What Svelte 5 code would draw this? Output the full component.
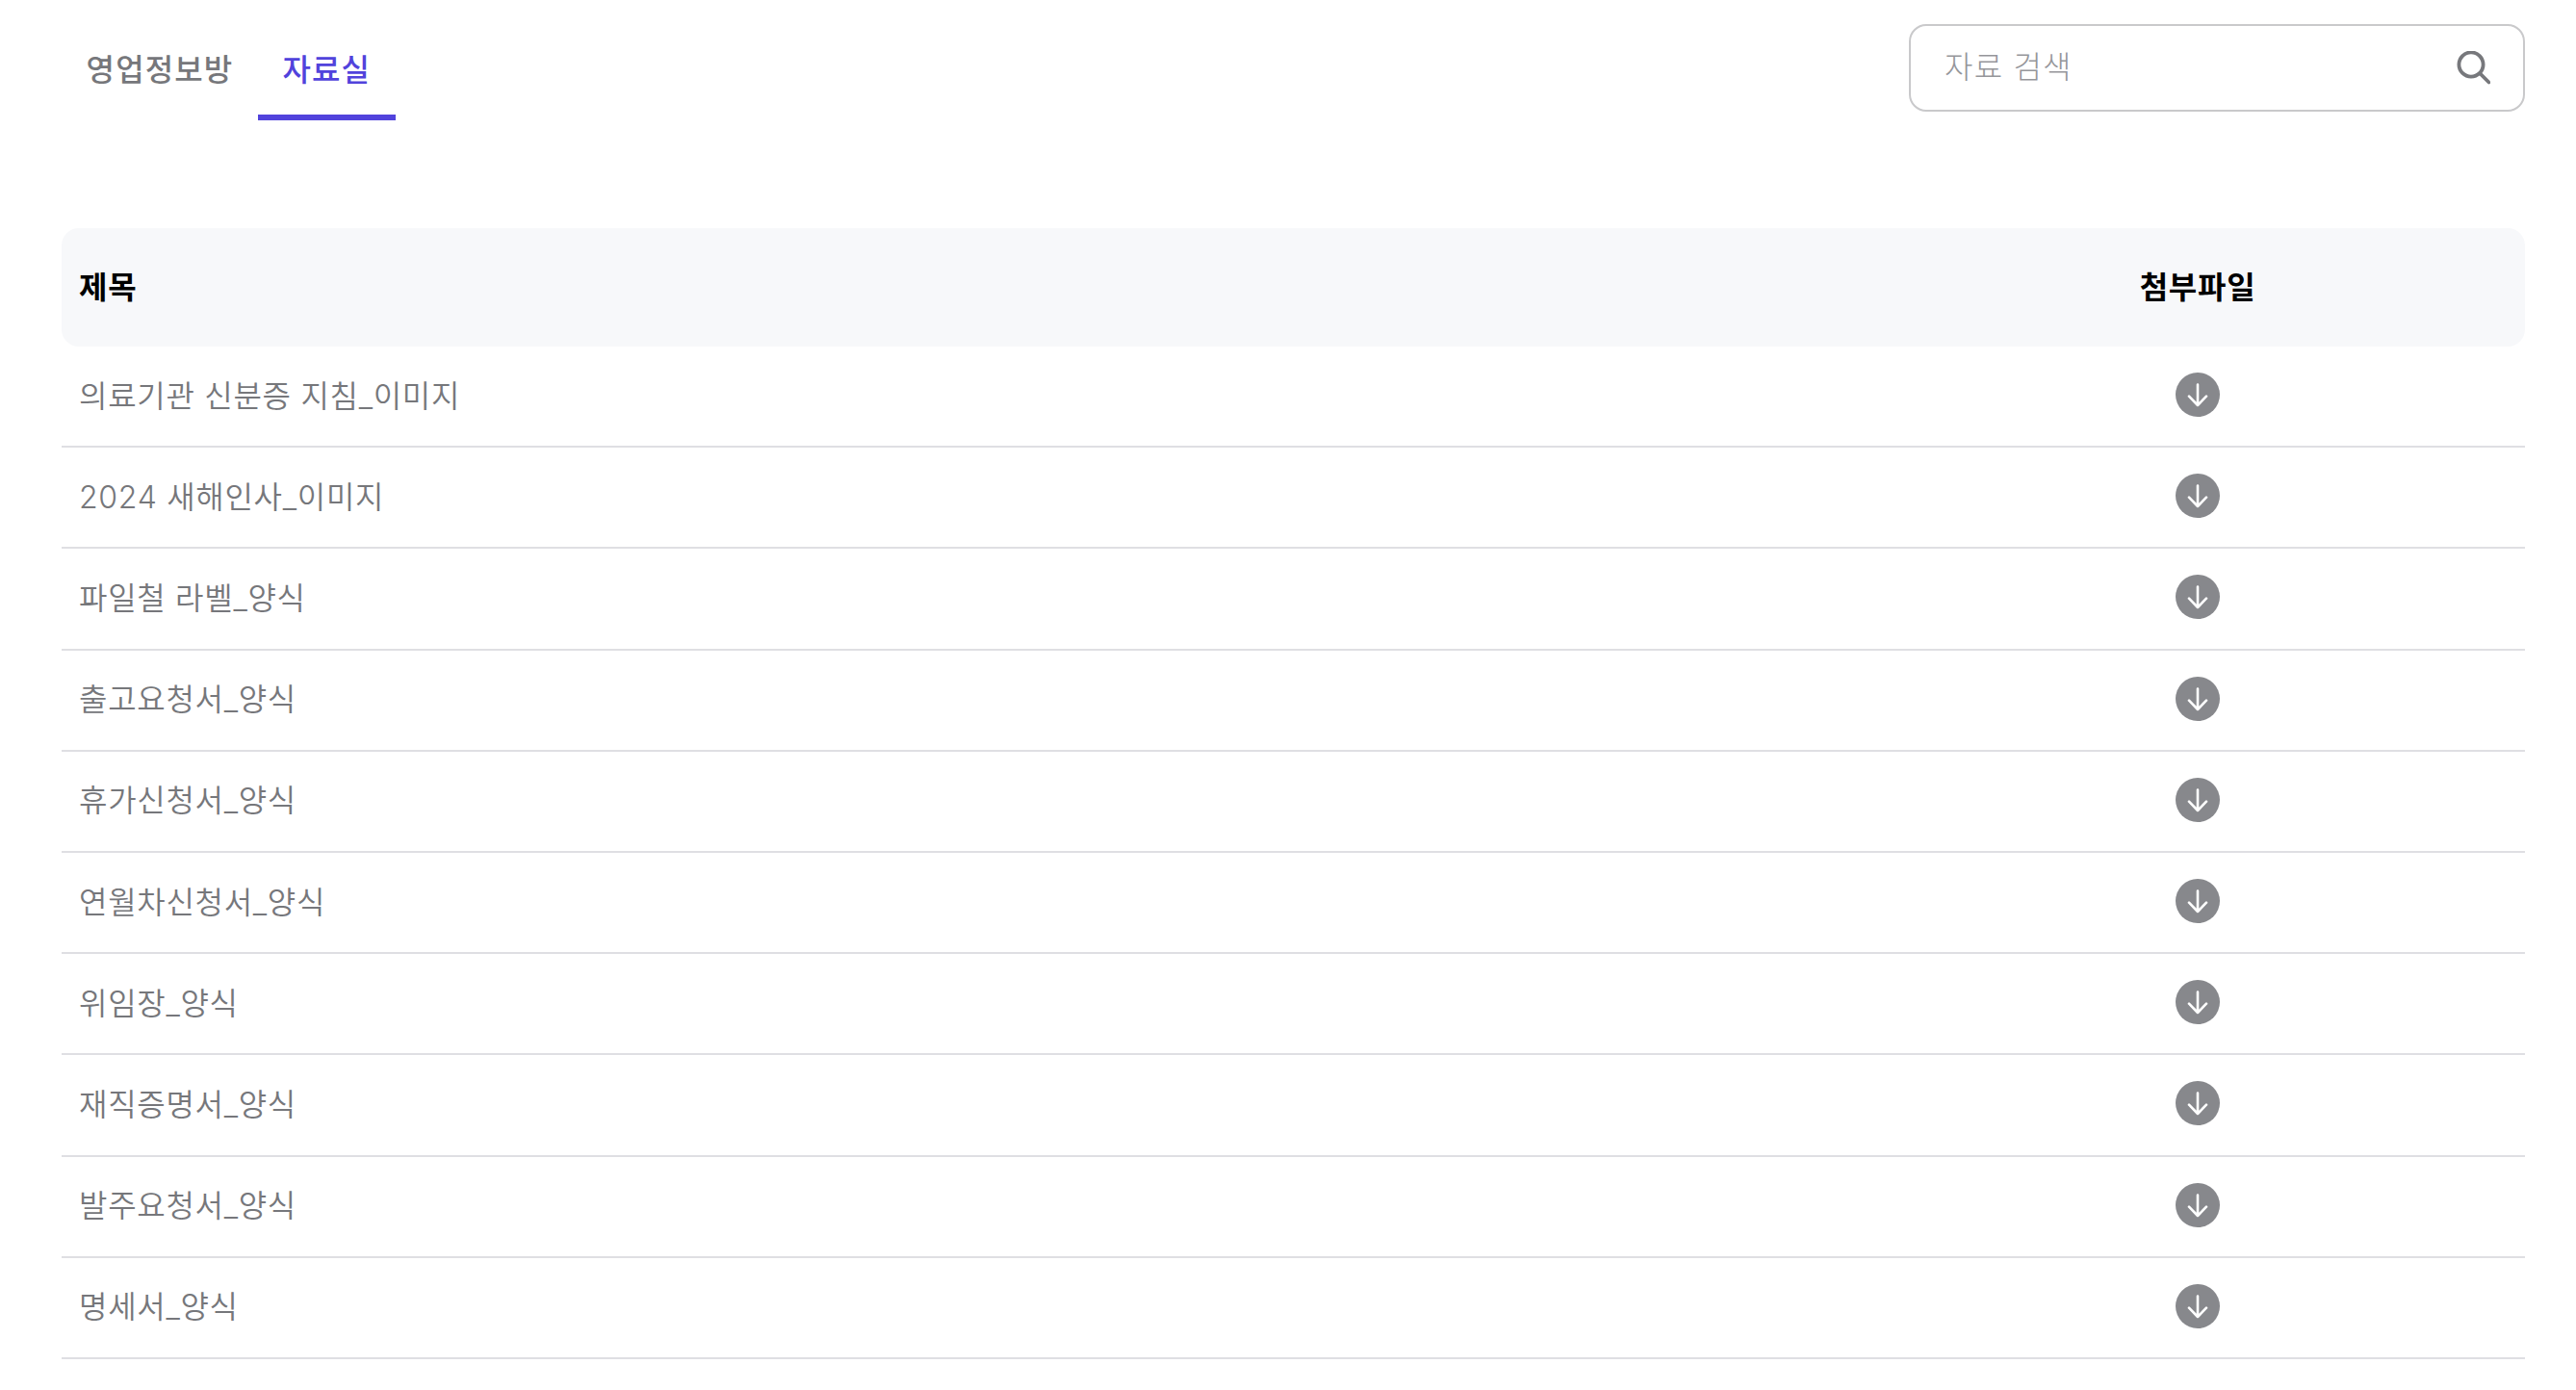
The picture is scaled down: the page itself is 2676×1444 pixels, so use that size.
<script lang="ts">
  const files: string[] = [
    '의료기관 신분증 지침_이미지',
    '2024 새해인사_이미지',
    '파일철 라벨_양식',
    '출고요청서_양식',
    '휴가신청서_양식',
    '연월차신청서_양식',
    '위임장_양식',
    '재직증명서_양식',
    '발주요청서_양식',
    '명세서_양식'
  ];
</script>

<div class="page">
  <div class="top">
    <nav class="tabs">
      <button class="tab"><span>영업정보방</span></button>
      <button class="tab active"><span>자료실</span></button>
    </nav>
    <div class="search">
      <input type="text" placeholder="자료 검색" />
      <svg class="search-icon" viewBox="0 0 36 36" width="36" height="36" fill="none" stroke="#77787c" stroke-width="3.8" stroke-linecap="round">
        <circle cx="16" cy="14" r="12.6" />
        <path d="M25.5 23.5l9 9" />
      </svg>
    </div>
  </div>

  <div class="list">
    <div class="row head">
      <div class="title">제목</div>
      <div class="file">첨부파일</div>
    </div>
    {#each files as name}
      <div class="row">
        <div class="title">{name}</div>
        <div class="file">
          <span class="download">
            <svg viewBox="0 0 46 46" width="46" height="46" fill="none" stroke="#fff" stroke-width="2.6" stroke-linecap="round" stroke-linejoin="round">
              <path d="M23 12.5v21.5M14 24.7L23 34l9-9.3" />
            </svg>
          </span>
        </div>
      </div>
    {/each}
  </div>
</div>

<style>
  :global(body) {
    margin: 0;
    background: #fff;
  }

  .page {
    padding: 25px 53px 0 64px;
    font-family: Inter, "Noto Sans CJK KR", sans-serif;
    font-size: 32px;
    letter-spacing: 0.7px;
    color: #76777b;
  }

  .top {
    display: flex;
    justify-content: space-between;
    align-items: flex-start;
    margin-bottom: 112px;
  }

  .tabs {
    display: flex;
  }

  .tab {
    height: 100px;
    padding: 0 25.6px 5px;
    border: none;
    border-bottom: 6px solid transparent;
    background: none;
    font: inherit;
    font-weight: 500;
    color: #76777b;
    letter-spacing: 1.1px;
  }

  .tab.active {
    color: #5143dc;
    border-bottom-color: #5143dc;
  }

  .search {
    display: flex;
    align-items: center;
    box-sizing: border-box;
    width: 640px;
    height: 91px;
    padding: 0 34px 0 35px;
    border: 2px solid #c9c9cb;
    border-radius: 18px;
  }

  .search input {
    flex: 1;
    min-width: 0;
    border: none;
    outline: none;
    padding: 0 0 2px;
    font: inherit;
    font-weight: 300;
    letter-spacing: 1.2px;
    color: #76777b;
  }

  .search input::placeholder {
    color: #95969a;
    opacity: 1;
  }

  .row {
    display: grid;
    grid-template-columns: 1fr 680px;
    align-items: center;
    box-sizing: border-box;
    height: 105.2px;
    padding-left: 18px;
    border-bottom: 2px solid #dfdfe3;
    font-weight: 350;
  }

  .title {
    padding-bottom: 6px;
  }

  .row.head {
    height: 123px;
    border-bottom: none;
    border-radius: 18px;
    background: #f7f8fa;
    color: #000;
    font-weight: 700;
  }

  .head .file {
    padding-bottom: 6px;
  }

  .file {
    display: flex;
    justify-content: center;
  }

  .download {
    display: block;
    width: 46px;
    height: 46px;
    margin-bottom: 3px;
    border-radius: 50%;
    background: #87888c;
  }

  .download svg {
    display: block;
  }
</style>
